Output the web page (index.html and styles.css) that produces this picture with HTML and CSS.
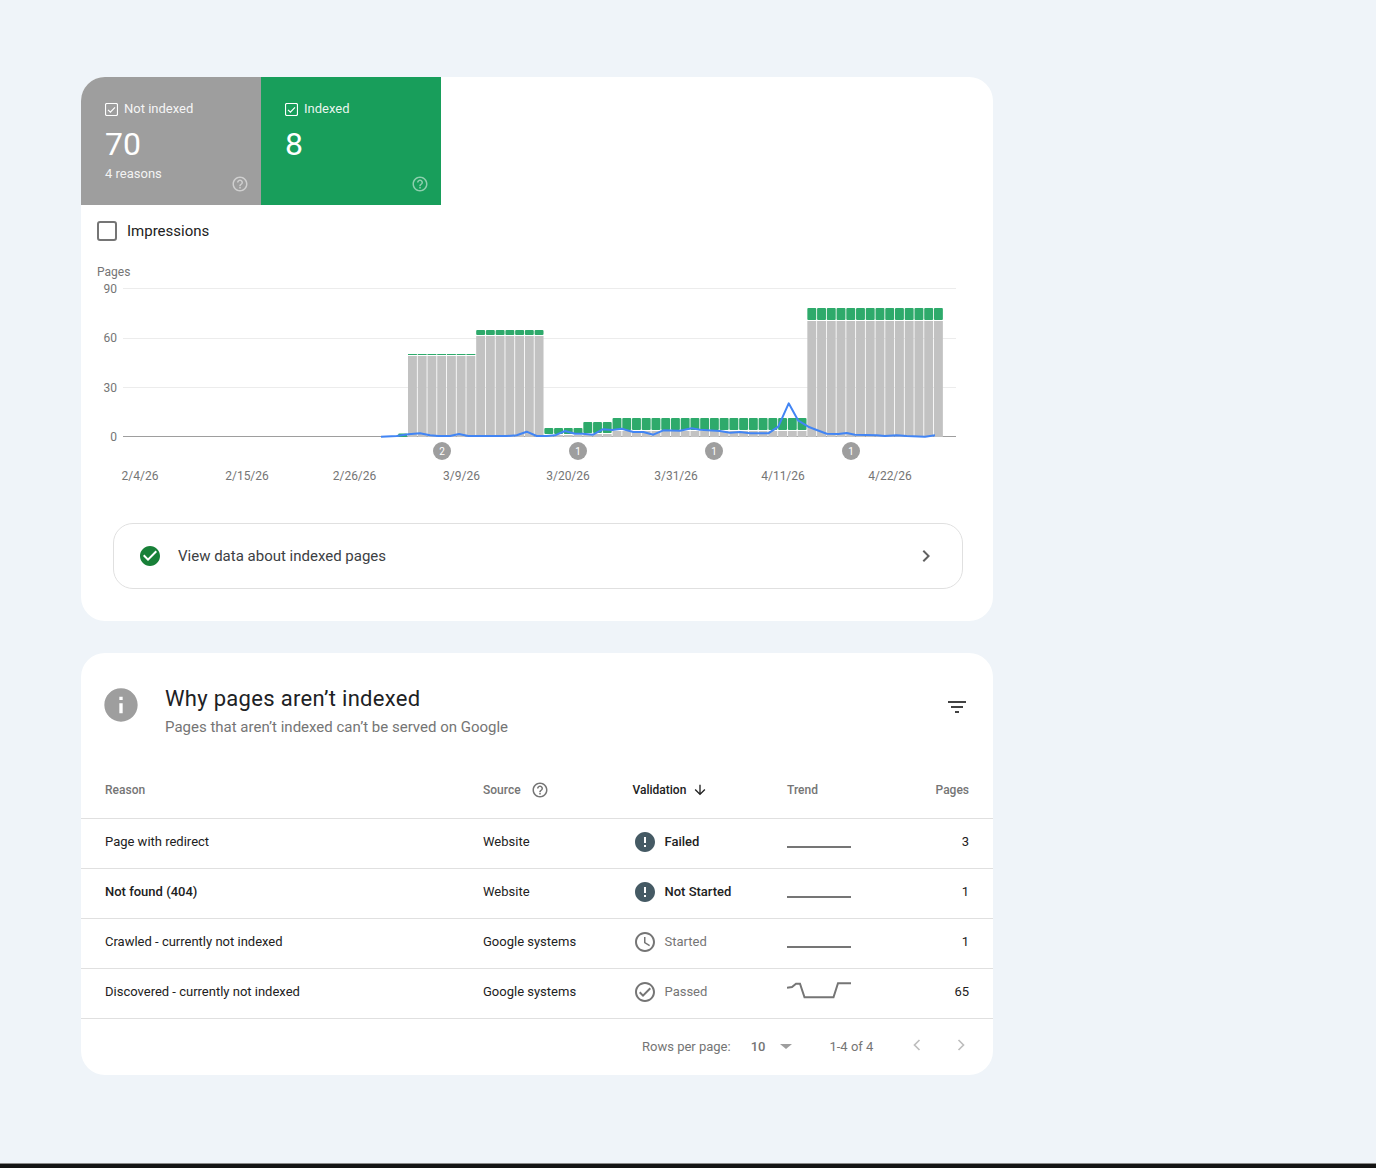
FILE: index.html
```html
<!DOCTYPE html>
<html lang="en">
<head>
    <meta charset="UTF-8">
    <title>Page indexing</title>
    <link rel="stylesheet" href="styles.css">
</head>
<body>
    <main class="content">
        <!-- Summary card with tabs and chart -->
        <section class="card">
            <div class="tabs">
                <div class="tab tab-grey">
                    <div class="tab-title">
                        <svg class="tab-check" viewBox="0 0 13 13"><rect x="0.5" y="0.5" width="12" height="12" rx="1.5"/><path d="M3 6.8l2.4 2.4L10 4.4"/></svg>
                        Not indexed
                    </div>
                    <div class="tab-value">70</div>
                    <div class="tab-note">4 reasons</div>
                    <svg class="tab-help" viewBox="0 0 24 24"><path d="M11 18h2v-2h-2v2zm1-16C6.48 2 2 6.48 2 12s4.48 10 10 10 10-4.48 10-10S17.52 2 12 2zm0 18c-4.41 0-8-3.59-8-8s3.59-8 8-8 8 3.59 8 8-3.59 8-8 8zm0-14c-2.21 0-4 1.79-4 4h2c0-1.1.9-2 2-2s2 .9 2 2c0 2-3 1.75-3 5h2c0-2.25 3-2.5 3-5 0-2.21-1.79-4-4-4z"/></svg>
                </div>
                <div class="tab tab-green">
                    <div class="tab-title">
                        <svg class="tab-check" viewBox="0 0 13 13"><rect x="0.5" y="0.5" width="12" height="12" rx="1.5"/><path d="M3 6.8l2.4 2.4L10 4.4"/></svg>
                        Indexed
                    </div>
                    <div class="tab-value">8</div>
                    <svg class="tab-help" viewBox="0 0 24 24"><path d="M11 18h2v-2h-2v2zm1-16C6.48 2 2 6.48 2 12s4.48 10 10 10 10-4.48 10-10S17.52 2 12 2zm0 18c-4.41 0-8-3.59-8-8s3.59-8 8-8 8 3.59 8 8-3.59 8-8 8zm0-14c-2.21 0-4 1.79-4 4h2c0-1.1.9-2 2-2s2 .9 2 2c0 2-3 1.75-3 5h2c0-2.25 3-2.5 3-5 0-2.21-1.79-4-4-4z"/></svg>
                </div>
            </div>

            <div class="impressions">
                <span class="checkbox"></span>
                <span>Impressions</span>
            </div>

            <!-- viewBox uses page coordinates so the chart data reads directly -->
            <svg id="chart" class="chart" viewBox="81 257 912 234"></svg>

            <div class="link-row">
                <svg class="icon icon-green" viewBox="0 0 24 24"><path d="M12 2C6.48 2 2 6.48 2 12s4.48 10 10 10 10-4.48 10-10S17.52 2 12 2zm-2 15l-5-5 1.41-1.41L10 14.17l7.59-7.59L19 8l-9 9z"/></svg>
                <span class="link-text">View data about indexed pages</span>
                <svg class="icon icon-chevron" viewBox="0 0 24 24"><path d="M10 6L8.59 7.41 13.17 12l-4.58 4.59L10 18l6-6z"/></svg>
            </div>
        </section>

        <!-- Reasons table -->
        <section class="card">
            <div class="hero">
                <svg class="hero-icon" viewBox="0 0 24 24"><path d="M12 2C6.48 2 2 6.48 2 12s4.48 10 10 10 10-4.48 10-10S17.52 2 12 2zm1 15h-2v-6h2v6zm0-8h-2V7h2v2z"/></svg>
                <div class="hero-text">
                    <h2 class="hero-title">Why pages aren’t indexed</h2>
                    <div class="hero-sub">Pages that aren’t indexed can’t be served on Google</div>
                </div>
                <svg class="icon icon-filter" viewBox="0 0 24 24"><path d="M10 18h4v-2h-4v2zM3 6v2h18V6H3zm3 7h12v-2H6v2z"/></svg>
            </div>

            <div class="row row-head">
                <div>Reason</div>
                <div class="head-source">
                    Source
                    <svg class="icon-small" viewBox="0 0 24 24"><path d="M11 18h2v-2h-2v2zm1-16C6.48 2 2 6.48 2 12s4.48 10 10 10 10-4.48 10-10S17.52 2 12 2zm0 18c-4.41 0-8-3.59-8-8s3.59-8 8-8 8 3.59 8 8-3.59 8-8 8zm0-14c-2.21 0-4 1.79-4 4h2c0-1.1.9-2 2-2s2 .9 2 2c0 2-3 1.75-3 5h2c0-2.25 3-2.5 3-5 0-2.21-1.79-4-4-4z"/></svg>
                </div>
                <div class="head-validation">
                    Validation
                    <svg class="icon-arrow" viewBox="0 0 24 24"><path d="M20 12l-1.41-1.41L13 16.17V4h-2v12.17l-5.58-5.59L4 12l8 8 8-8z"/></svg>
                </div>
                <div>Trend</div>
                <div class="cell-right">Pages</div>
            </div>

            <div class="row">
                <div>Page with redirect</div>
                <div>Website</div>
                <div class="status status-bad">
                    <svg class="icon" viewBox="0 0 24 24"><path d="M12 2C6.48 2 2 6.48 2 12s4.48 10 10 10 10-4.48 10-10S17.52 2 12 2zm1 15h-2v-2h2v2zm0-4h-2V7h2v6z"/></svg>
                    Failed
                </div>
                <svg class="trend" viewBox="0 0 64 49"><path d="M0 28H64"/></svg>
                <div class="cell-right">3</div>
            </div>
            <div class="row">
                <div class="cell-bold">Not found (404)</div>
                <div>Website</div>
                <div class="status status-bad">
                    <svg class="icon" viewBox="0 0 24 24"><path d="M12 2C6.48 2 2 6.48 2 12s4.48 10 10 10 10-4.48 10-10S17.52 2 12 2zm1 15h-2v-2h2v2zm0-4h-2V7h2v6z"/></svg>
                    Not Started
                </div>
                <svg class="trend" viewBox="0 0 64 49"><path d="M0 28H64"/></svg>
                <div class="cell-right">1</div>
            </div>
            <div class="row">
                <div>Crawled - currently not indexed</div>
                <div>Google systems</div>
                <div class="status status-muted">
                    <svg class="icon" viewBox="0 0 24 24"><path d="M11.99 2C6.47 2 2 6.48 2 12s4.47 10 9.99 10C17.52 22 22 17.52 22 12S17.52 2 11.99 2zM12 20c-4.42 0-8-3.58-8-8s3.58-8 8-8 8 3.58 8 8-3.58 8-8 8zm.5-13H11v6l5.25 3.15.75-1.23-4.5-2.67z"/></svg>
                    Started
                </div>
                <svg class="trend" viewBox="0 0 64 49"><path d="M0 28H64"/></svg>
                <div class="cell-right">1</div>
            </div>
            <div class="row">
                <div>Discovered - currently not indexed</div>
                <div>Google systems</div>
                <div class="status status-muted">
                    <svg class="icon" viewBox="0 0 24 24"><path d="M12 2C6.48 2 2 6.48 2 12s4.48 10 10 10 10-4.48 10-10S17.52 2 12 2zm0 18c-4.41 0-8-3.59-8-8s3.59-8 8-8 8 3.59 8 8-3.59 8-8 8zm4.59-12.42L10 14.17l-2.59-2.58L6 13l4 4 8-8z"/></svg>
                    Passed
                </div>
                <svg class="trend" viewBox="0 0 64 49"><path d="M0 18.800L5 18 9 14.800H13L17.500 28.200H46.500L51 14.200H64"/></svg>
                <div class="cell-right">65</div>
            </div>

            <div class="pager">
                <span>Rows per page:</span>
                <span class="pager-size">10</span>
                <span class="pager-caret"></span>
                <span class="pager-range">1-4 of 4</span>
                <svg class="pager-arrow" viewBox="0 0 24 24"><path d="M15 6l-6 6 6 6"/></svg>
                <svg class="pager-arrow" viewBox="0 0 24 24"><path d="M9 6l6 6-6 6"/></svg>
            </div>
        </section>
    </main>
    <div class="bottom-strip"></div>

    <script src="chart.js"></script>
</body>
</html>
```

FILE: styles.css
```css
* {
    box-sizing: border-box;
}
html, body {
    margin: 0;
    height: 100%;
}
body {
    background-color: #eff4f9;
    color: #212121;
    font-family: Roboto, "Liberation Sans", sans-serif;
    font-size: 13px;
    display: flex;
    flex-direction: column;
    height: 1168px;
    overflow: hidden;
}
.content {
    flex: 1;
    padding: 77px 0 0 81px;
    display: flex;
    flex-direction: column;
    gap: 32px;
}
.bottom-strip {
    height: 5px;
    background-color: #141414;
    border-top: 1px solid #8a8a8a;
}
.card {
    width: 912px;
    background-color: white;
    border-radius: 24px;
    overflow: hidden;
}

/* Tabs */
.tabs {
    display: flex;
}
.tab {
    position: relative;
    width: 180px;
    height: 128px;
    padding: 23px 24px 0;
    color: white;
}
.tab-grey {
    background-color: #9e9e9e;
}
.tab-green {
    background-color: #189e5b;
}
.tab-title {
    display: flex;
    align-items: center;
    gap: 6px;
    height: 16px;
    color: rgba(255, 255, 255, 0.92);
}
.tab-check {
    width: 13px;
    height: 13px;
    margin-top: 3px;
    fill: none;
    stroke: white;
    stroke-width: 1.2;
}
.tab-value {
    font-size: 32px;
    line-height: 38px;
    margin-top: 9px;
}
.tab-note {
    font-size: 13px;
    line-height: 16px;
    margin-top: 3px;
    color: rgba(255, 255, 255, 0.9);
}
.tab-help {
    position: absolute;
    right: 12px;
    bottom: 12px;
    width: 18px;
    height: 18px;
    fill: rgba(255, 255, 255, 0.5);
}

/* Impressions toggle */
.impressions {
    display: flex;
    align-items: center;
    gap: 10px;
    height: 52px;
    padding-left: 16px;
    font-size: 15px;
}
.checkbox {
    width: 20px;
    height: 20px;
    border: 2px solid #757575;
    border-radius: 3px;
}

/* Chart */
.chart {
    display: block;
    width: 912px;
    height: 234px;
}
.chart text {
    font-family: Roboto, "Liberation Sans", sans-serif;
    font-size: 12px;
    fill: #757575;
}
.chart .marker-text {
    font-size: 10px;
    fill: white;
}

/* Link row under the chart */
.link-row {
    display: flex;
    align-items: center;
    gap: 16px;
    height: 66px;
    margin: 32px 30px 32px 32px;
    padding: 0 24px;
    border: 1px solid #e0e0e0;
    border-radius: 20px;
}
.link-text {
    flex: 1;
    font-size: 15px;
    color: #3c4043;
}
.icon {
    width: 24px;
    height: 24px;
    flex-shrink: 0;
}
.icon-green {
    fill: #188038;
}
.icon-chevron {
    fill: #616161;
}

/* Reasons header */
.hero {
    display: flex;
    align-items: flex-start;
    height: 108px;
    padding: 32px 24px 0 20px;
}
.hero-icon {
    width: 40px;
    height: 40px;
    fill: #9e9e9e;
}
.hero-text {
    flex: 1;
    margin-left: 24px;
}
.hero-title {
    margin: 0;
    font-size: 22px;
    font-weight: 400;
    line-height: 28px;
    letter-spacing: 0.3px;
    color: #202124;
}
.hero-sub {
    margin-top: 4px;
    font-size: 15px;
    line-height: 20px;
    color: #757575;
}
.icon-filter {
    fill: #424242;
    margin-top: 10px;
}

/* Table rows */
.row {
    display: grid;
    grid-template-columns: 378px 149px 155px 1fr 60px;
    grid-template-rows: 45px; /* trend svg is taller and hangs out of this */
    align-items: center;
    height: 50px;
    padding: 0 24px 4px;
    border-bottom: 1px solid #e0e0e0;
}
.row-head {
    grid-template-rows: 1fr;
    height: 58px;
    font-size: 12px;
    font-weight: 500;
    color: #757575;
    padding: 1px 24px 0;
}
.head-source {
    display: flex;
    align-items: center;
    gap: 10px;
}
.icon-small {
    width: 18px;
    height: 18px;
    fill: #757575;
}
.head-validation {
    display: flex;
    align-items: center;
    gap: 6px;
    margin-left: 0.5px;
    color: #212121;
}
.icon-arrow {
    width: 16px;
    height: 16px;
    fill: #212121;
}
.cell-right {
    text-align: right;
}
.cell-bold {
    font-weight: 500;
}
.status {
    display: flex;
    align-items: center;
    gap: 8px;
    margin-left: 0.5px;
}
.status-bad {
    font-weight: 500;
}
.status-bad .icon {
    fill: #455a64;
}
.status-muted {
    color: #757575;
}
.status-muted .icon {
    fill: #757575;
}
.trend {
    align-self: start;
    width: 64px;
    height: 49px;
    fill: none;
    stroke: #757575;
    stroke-width: 2;
}

/* Pager */
.pager {
    display: flex;
    align-items: center;
    height: 56px;
    padding: 0 0 2px 561px;
    color: #757575;
}
.pager-size {
    margin-left: 20px;
    font-weight: 500;
}
.pager-caret {
    margin-left: 15px;
    border-left: 6px solid transparent;
    border-right: 6px solid transparent;
    border-top: 5px solid #9e9e9e;
}
.pager-range {
    margin-left: 37px;
}
.pager-arrow {
    width: 20px;
    height: 20px;
    margin-left: 24px;
    margin-top: -3px;
    fill: none;
    stroke: #bdbdbd;
    stroke-width: 2;
}
.pager-range + .pager-arrow {
    margin-left: 34px;
}
```

FILE: chart.js
```js
const SVG_NS = 'http://www.w3.org/2000/svg';
const chart = document.getElementById('chart');

function add(tag, attrs, text) {
    const el = document.createElementNS(SVG_NS, tag);
    for (const key in attrs) {
        el.setAttribute(key, attrs[key]);
    }
    if (text !== undefined) {
        el.textContent = text;
    }
    chart.appendChild(el);
    return el;
}

const BASE = 437;
const STEP = 9.74;
const BAR_W = 8.9;

add('text', { x: 97, y: 276 }, 'Pages');

// Grid lines and y axis labels
[[90, 288.5, 293], [60, 338.5, 342], [30, 387.5, 392]].forEach(([label, y, textY]) => {
    add('line', { x1: 123, x2: 956, y1: y, y2: y, stroke: '#ececec', 'stroke-width': 1 });
    add('text', { x: 117, y: textY, 'text-anchor': 'end' }, label);
});
add('text', { x: 117, y: 441, 'text-anchor': 'end' }, 0);
add('line', { x1: 123, x2: 956, y1: 436.5, y2: 436.5, stroke: '#9e9e9e', 'stroke-width': 1 });

// Each bar: [green top, green bottom, grey top]
function barFor(i) {
    if (i < 0) return [433.5, 437, 437];
    if (i < 7) return [354, 355, 356];
    if (i < 14) return [330, 335, 336];
    if (i < 18) return [428, 434, 435];
    if (i < 21) return [422, 433, 434];
    if (i < 41) return [418, 430, 431];
    return [308, 320, 321];
}

for (let i = -1; i < 55; i++) {
    const x = 408 + i * STEP;
    const [greenTop, greenBottom, greyTop] = barFor(i);
    if (greyTop < BASE) {
        add('rect', { x: x, y: greyTop, width: BAR_W, height: BASE - greyTop, fill: '#c2c2c2' });
    }
    add('rect', { x: x, y: greenTop, width: BAR_W, height: greenBottom - greenTop, rx: i > 6 || i < 0 ? 1 : 0, fill: '#2eaa6b' });
}

// Impressions line
const line = [
    [381, 436.7], [396.7, 436], [408.3, 434.3], [420, 433.3], [430, 435.3], [438.3, 436], [450, 436],
    [459, 434], [468.3, 436], [506.7, 436], [516.7, 435.3], [526.7, 431.7], [536.7, 436], [546.7, 436],
    [555, 435.3], [565, 431], [575, 433.7], [583, 433.7], [593, 434.7], [602.7, 429.3], [612.3, 430],
    [621.7, 428.7], [633.3, 432], [643.3, 432], [653.3, 434.7], [663.3, 430.3], [680, 430.7],
    [691.7, 428.3], [700, 429.7], [720, 431], [730, 432.7], [740, 432], [750, 433.3], [768.3, 433.3],
    [778.3, 426.7], [788.7, 403.3], [798.3, 420.7], [808.3, 426.7], [816.7, 430], [826.7, 433.7],
    [838.3, 434], [846.7, 433], [855, 434.7], [876.7, 435.3], [885, 436], [896.7, 435.3], [906.7, 436],
    [925, 436.7], [935, 435.3]
];
add('polyline', {
    points: line.map(p => p.join(',')).join(' '),
    fill: 'none',
    stroke: '#4285f4',
    'stroke-width': 2,
    'stroke-linejoin': 'round'
});

// Annotation markers
[[442, 2], [578, 1], [714, 1], [851, 1]].forEach(([x, label]) => {
    add('circle', { cx: x, cy: 451, r: 9, fill: '#9e9e9e' });
    add('text', { x: x, y: 454.5, 'text-anchor': 'middle', class: 'marker-text' }, label);
});

// Dates
[
    [140, '2/4/26'], [247, '2/15/26'], [354.5, '2/26/26'], [461.5, '3/9/26'],
    [568, '3/20/26'], [676, '3/31/26'], [783, '4/11/26'], [890, '4/22/26']
].forEach(([x, label]) => {
    add('text', { x: x, y: 480, 'text-anchor': 'middle' }, label);
});
```
